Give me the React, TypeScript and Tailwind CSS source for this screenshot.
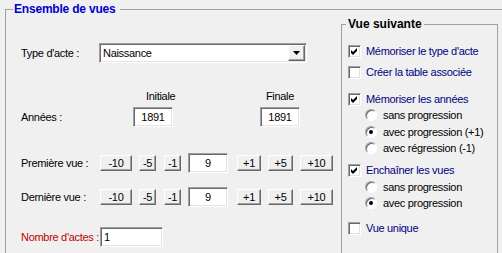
import React from "react";

const sunken =
  "bg-white border border-t-[#a0a0a0] border-l-[#a0a0a0] border-r-white border-b-white shadow-[inset_1px_1px_0_#696969,inset_-1px_-1px_0_#e3e3e3]";
const raised =
  "bg-[#f0f0f0] border border-t-white border-l-white border-r-[#696969] border-b-[#696969] shadow-[inset_-1px_-1px_0_#a0a0a0]";

function Field({ className, children }: { className: string; children?: React.ReactNode }) {
  return <div className={`h-[20px] flex items-center ${sunken} ${className}`}>{children}</div>;
}

function Btn({ className, label }: { className: string; label: string }) {
  return <div className={`h-[16px] flex items-center justify-center ${raised} ${className}`}>{label}</div>;
}

function Check({ checked }: { checked?: boolean }) {
  return (
    <div className={`relative w-[13px] h-[13px] shrink-0 ${sunken}`}>
      {checked && (
        <svg className="absolute left-0 top-0" width="11" height="11" viewBox="0 0 11 11">
          <polygon points="2,4 4,6 8,2 8,5 4,9 2,7" fill="#000" />
        </svg>
      )}
    </div>
  );
}

function Radio({ checked }: { checked?: boolean }) {
  return (
    <div className="w-[12px] h-[12px] shrink-0 rounded-full bg-white border border-t-[#a0a0a0] border-l-[#a0a0a0] border-r-white border-b-white shadow-[inset_1px_1px_0_#696969] flex items-center justify-center">
      {checked && <div className="w-[4px] h-[4px] rounded-full bg-black" />}
    </div>
  );
}

function VueRow({ label, className }: { label: string; className: string }) {
  return (
    <div className={`flex items-center h-[20px] ${className}`}>
      <span className="w-[79px]">{label}</span>
      <Btn className="w-[32px]" label="-10" />
      <Btn className="w-[17px] ml-[7px]" label="-5" />
      <Btn className="w-[17px] ml-[8px]" label="-1" />
      <Field className="w-[40px] ml-[7px] justify-center">9</Field>
      <Btn className="w-[24px] ml-[9px]" label="+1" />
      <Btn className="w-[25px] ml-[7px]" label="+5" />
      <Btn className="w-[33px] ml-[7px]" label="+10" />
    </div>
  );
}

export default function App() {
  return (
    <div className="w-[502px] h-[253px] overflow-hidden bg-[#f0f0f0] text-black text-[11px] tracking-[-0.3px] font-['Liberation_Sans',Arial,sans-serif]">
      <fieldset className="mt-[2px] ml-[5px] w-[510px] h-[270px] border-t border-l border-[#a0a0a0]">
        <legend className="ml-[7px] pl-[1px] pr-[4px] font-bold text-[12px] leading-[14px] tracking-[-0.2px] text-[#0000cc]">
          Ensemble de vues
        </legend>
        <div className="flex">
          {/* formulaire */}
          <div className="w-[335px] pl-[15px] leading-[13px]">
            <div className="flex items-center h-[20px] mt-[27px]">
              <span className="w-[78px]">Type d'acte :</span>
              <Field className="w-[208px] pl-[3px] relative">
                Naissance
                <div className={`absolute right-[1px] top-[1px] w-[17px] h-[16px] flex items-center justify-center ${raised}`}>
                  <svg width="7" height="4" viewBox="0 0 7 4">
                    <polygon points="0,0 7,0 3.5,4" fill="#000" />
                  </svg>
                </div>
              </Field>
            </div>

            <div className="flex h-[13px] mt-[27px]">
              <span className="w-[112px]" />
              <span className="w-[40px] pl-[13px] whitespace-nowrap">Initiale</span>
              <span className="w-[40px] ml-[87px] text-center">Finale</span>
            </div>
            <div className="flex items-center h-[20px] mt-[4px]">
              <span className="w-[112px]">Années :</span>
              <Field className="w-[40px] justify-center">1891</Field>
              <Field className="w-[40px] ml-[87px] justify-center">1891</Field>
            </div>

            <VueRow label="Première vue :" className="mt-[26px]" />
            <VueRow label="Dernière vue :" className="mt-[14px]" />

            <div className="flex items-center h-[20px] mt-[20px]">
              <span className="w-[79px] text-[#c00000] whitespace-nowrap">Nombre d'actes :</span>
              <Field className="w-[63px] pl-[3px]">1</Field>
            </div>
          </div>

          {/* Vue suivante */}
          <fieldset className="mt-[1px] w-[157px] border border-[#a0a0a0] pb-[18px]">
            <legend className="ml-[4px] px-[2px] font-bold text-[12px] leading-[14px] tracking-[0px]">
              Vue suivante
            </legend>
            <div className="pl-[6px] leading-[13px]">
              <div className="flex items-center h-[16px] gap-[5px] mt-[12px] text-[#000080]">
                <Check checked />
                <span>Mémoriser le type d'acte</span>
              </div>
              <div className="flex items-center h-[16px] gap-[5px] mt-[5px] text-[#000080]">
                <Check />
                <span>Créer la table associée</span>
              </div>
              <div className="flex items-center h-[16px] gap-[5px] mt-[11px] text-[#000080]">
                <Check checked />
                <span>Mémoriser les années</span>
              </div>
              <div className="flex items-center h-[16px] gap-[6px] pl-[17px]">
                <Radio />
                <span>sans progression</span>
              </div>
              <div className="flex items-center h-[16px] gap-[6px] pl-[17px] mt-[1px]">
                <Radio checked />
                <span>avec progression (+1)</span>
              </div>
              <div className="flex items-center h-[16px] gap-[6px] pl-[17px]">
                <Radio />
                <span>avec régression (-1)</span>
              </div>
              <div className="flex items-center h-[16px] gap-[5px] mt-[6px] text-[#000080]">
                <Check checked />
                <span>Enchaîner les vues</span>
              </div>
              <div className="flex items-center h-[16px] gap-[6px] pl-[17px] mt-[1px]">
                <Radio />
                <span>sans progression</span>
              </div>
              <div className="flex items-center h-[16px] gap-[6px] pl-[17px]">
                <Radio checked />
                <span>avec progression</span>
              </div>
              <div className="flex items-center h-[16px] gap-[5px] mt-[9px] text-[#000080]">
                <Check />
                <span>Vue unique</span>
              </div>
            </div>
          </fieldset>
        </div>
      </fieldset>
    </div>
  );
}
